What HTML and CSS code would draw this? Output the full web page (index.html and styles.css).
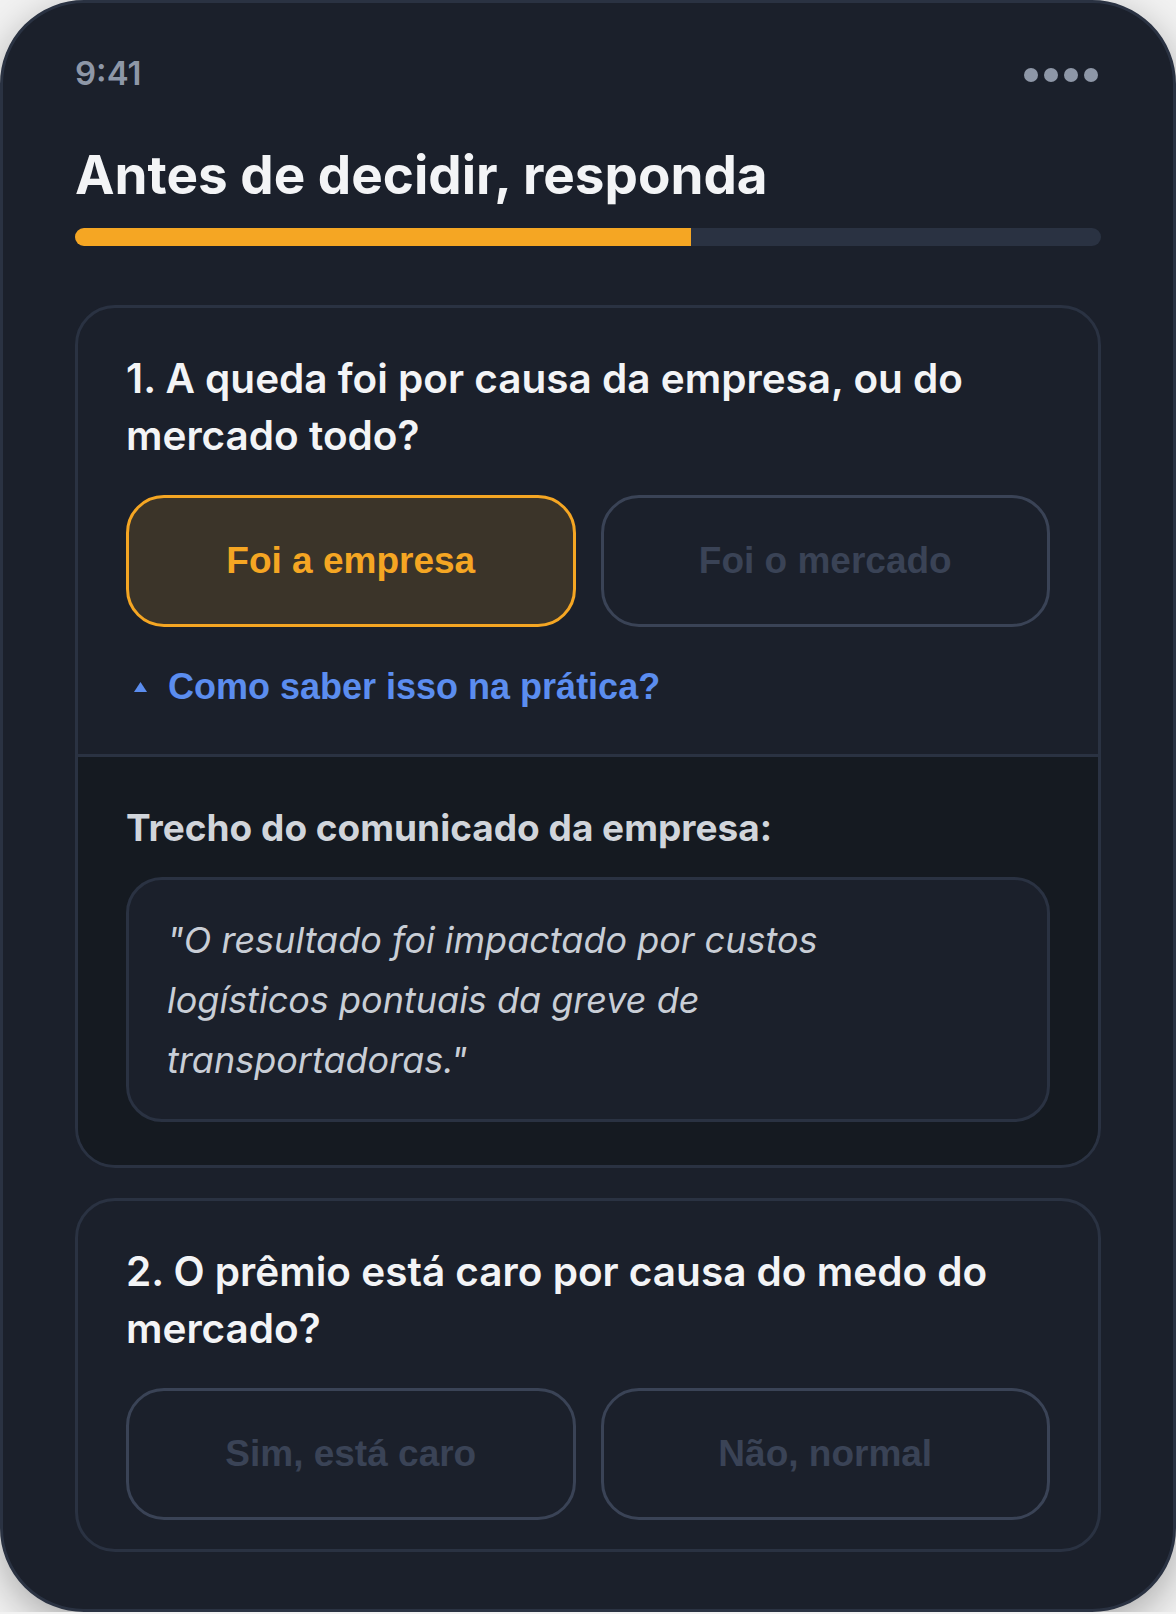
FILE: index.html
```html
<!DOCTYPE html>
<html lang="pt-BR">
<head>
    <title>Antes de decidir</title>
    <meta charset="UTF-8">
    <meta name="viewport" content="width=device-width, initial-scale=1.0">
    <link rel="stylesheet" href="styles.css">
</head>
<body>
    <div class="phone">
        <div class="status-bar">
            <span class="time">9:41</span>
            <span class="signal"><i></i><i></i><i></i><i></i></span>
        </div>

        <h1 class="title">Antes de decidir, responda</h1>

        <div class="progress">
            <div class="progress-fill" style="width: 60%;"></div>
        </div>

        <section class="card">
            <div class="card-body">
                <h2 class="question">1. A queda foi por causa da empresa, ou do mercado todo?</h2>
                <div class="options">
                    <button class="option selected">Foi a empresa</button>
                    <button class="option">Foi o mercado</button>
                </div>
                <button class="hint-toggle">
                    <svg class="arrow" width="13" height="10" viewBox="0 0 13 10"><polygon points="6.5,0 13,10 0,10" fill="#5b8def"/></svg>
                    Como saber isso na prática?
                </button>
            </div>
            <div class="hint">
                <p class="hint-label">Trecho do comunicado da empresa:</p>
                <blockquote class="quote">"O resultado foi impactado por custos logísticos pontuais da greve de transportadoras."</blockquote>
            </div>
        </section>

        <section class="card">
            <div class="card-body">
                <h2 class="question">2. O prêmio está caro por causa do medo do mercado?</h2>
                <div class="options">
                    <button class="option">Sim, está caro</button>
                    <button class="option">Não, normal</button>
                </div>
            </div>
        </section>
    </div>
</body>
</html>
```

FILE: styles.css
```css
body {
    margin: 0;
    background-color: #f2f2f2;
    font-family: Inter, "Noto Sans", sans-serif;
}

.phone {
    box-sizing: border-box;
    width: 1176px;
    height: 1612px;
    padding: 49px 72px 0;
    background-color: #1b202b;
    border: 3px solid #2a3242;
    border-radius: 84px;
    box-shadow: 0 12px 40px rgba(0, 0, 0, 0.3);
    overflow: hidden;
}

.status-bar {
    display: flex;
    justify-content: space-between;
    align-items: center;
    height: 41px;
}

.time {
    font-size: 33px;
    font-weight: 600;
    color: #8e97a7;
}

.signal {
    display: flex;
    gap: 6px;
    margin: 4px 3px 0 0;
}

.signal i {
    width: 14px;
    height: 14px;
    border-radius: 50%;
    background-color: #8e97a7;
}

.title {
    margin: 51px 0 0;
    font-size: 53px;
    line-height: 63px;
    font-weight: 700;
    color: #f3f4f6;
}

.progress {
    height: 18px;
    margin-top: 21px;
    border-radius: 9px;
    background-color: #2a3242;
    overflow: hidden;
}

.progress-fill {
    height: 100%;
    background-color: #f5a623;
}

.card {
    margin-top: 59px;
    border: 3px solid #2a3242;
    border-radius: 40px;
    overflow: hidden;
}

.card + .card {
    margin-top: 30px;
}

.card-body {
    padding: 42px 48px 29px;
}

.question {
    margin: 0;
    font-size: 40.5px;
    line-height: 57px;
    font-weight: 600;
    color: #f3f4f6;
}

.options {
    display: grid;
    grid-template-columns: 1fr 1fr;
    gap: 25px;
    margin-top: 31px;
}

.option {
    height: 132px;
    border: 3px solid #3a4356;
    border-radius: 38px;
    background: transparent;
    font-family: "Liberation Sans", Arial, sans-serif;
    font-size: 37px;
    font-weight: 700;
    color: #3a4356;
}

.option.selected {
    border-color: #f5a623;
    background-color: rgba(245, 166, 35, 0.15);
    color: #f5a623;
}

.hint-toggle {
    display: flex;
    align-items: center;
    margin: 39px 0 17px;
    padding: 0;
    border: none;
    background: none;
    font-family: "Liberation Sans", Arial, sans-serif;
    font-size: 36px;
    font-weight: 700;
    color: #5b8def;
}

.arrow {
    margin: 0 21px 0 8px;
}

.hint {
    padding: 48px 48px 43px;
    background-color: #151a21;
    border-top: 3px solid #2a3242;
}

.hint-label {
    margin: 0 0 27px;
    font-size: 37px;
    font-weight: 700;
    color: #d1d5db;
}

.quote {
    margin: 0;
    padding: 30px 80px 29px 38px;
    background-color: #1b202b;
    border: 3px solid #2a3242;
    border-radius: 36px;
    font-size: 36px;
    line-height: 60px;
    font-style: italic;
    color: #c9ced6;
}
```
